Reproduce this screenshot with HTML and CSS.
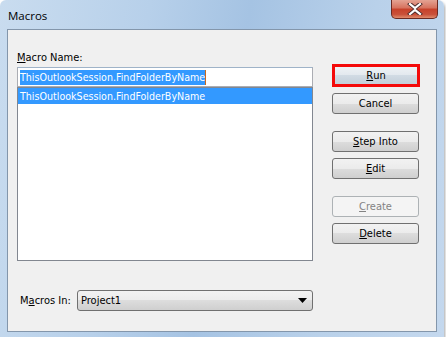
FILE: index.html
```html
<!DOCTYPE html>
<html lang="en">
<head>
  <meta charset="UTF-8">
  <title>Macros</title>
  <link rel="stylesheet" href="styles.css">
</head>
<body>

  <div class="window">
    <div class="titlebar">
      <span class="title">Macros</span>
      <div class="close">
        <svg width="16" height="12" viewBox="0 0 16 12">
          <path d="M3 1 L8 5 L13 1 M3 11 L8 7 L13 11" stroke="#4a2a2a" stroke-width="4" fill="none" stroke-linecap="square"/>
          <path d="M3 1 L8 5 L13 1 M3 11 L8 7 L13 11" stroke="#ffffff" stroke-width="2.2" fill="none" stroke-linecap="square"/>
        </svg>
      </div>
    </div>

    <div class="client">
      <div class="top">
        <div class="left">
          <div class="label"><u>M</u>acro Name:</div>
          <div class="textbox"><span class="sel">ThisOutlookSession.FindFolderByName</span><span class="caret"></span></div>
          <div class="listbox">
            <div class="item selected">ThisOutlookSession.FindFolderByName</div>
          </div>
        </div>

        <div class="right">
          <div class="btn run"><u>R</u>un</div>
          <div class="btn gap-s">Cancel</div>
          <div class="btn gap-l"><u>S</u>tep Into</div>
          <div class="btn gap-s"><u>E</u>dit</div>
          <div class="btn gap-l disabled"><u>C</u>reate</div>
          <div class="btn gap-s"><u>D</u>elete</div>
        </div>
      </div>

      <div class="bottom">
        <span class="label">M<u>a</u>cros In:</span>
        <div class="combo">
          <span>Project1</span>
          <svg width="9" height="5" viewBox="0 0 9 5"><path d="M0 0 H9 L4.5 5 Z" fill="#000"/></svg>
        </div>
      </div>
    </div>
  </div>

</body>
</html>
```

FILE: styles.css
```css
body {
  margin: 0;
  background: #ffffff;
  font-family: "DejaVu Sans Condensed", "Liberation Sans", sans-serif;
  font-size: 11px;
  color: #000;
}

.window {
  width: 444px;
  height: 337px;
  border-radius: 6px 6px 0 0;
  background: linear-gradient(100deg, #c9dcef 0%, #b7d0ea 30%, #a5c3e3 50%, #b9d1ea 75%, #c4d8ee 100%);
  box-shadow: 1px 2px 3px rgba(0,0,0,0.35);
  position: relative;
}

.titlebar {
  height: 29px;
  position: relative;
}

.title {
  position: absolute;
  left: 8px;
  top: 8px;
  font-family: "Open Sans", "Liberation Sans", sans-serif;
  font-size: 11.5px;
  color: #000;
}

.close {
  position: absolute;
  left: 391px;
  top: 0;
  width: 47px;
  height: 19px;
  border: 1px solid #6b2b23;
  border-top: none;
  border-radius: 0 0 5px 5px;
  background: linear-gradient(#e4a393 0%, #d6715d 45%, #c7412a 50%, #c9513a 80%, #e08b6c 100%);
  display: flex;
  align-items: center;
  justify-content: center;
  box-sizing: border-box;
}

.client {
  margin-left: 7px;
  width: 430px;
  height: 303px;
  border: 1px solid #8396ab;
  background: #f0f0f0;
  box-sizing: border-box;
  padding: 21px 0 0 9px;
}

.top {
  display: flex;
  gap: 19px;
}

.left {
  width: 296px;
}

.label {
  height: 15px;
  line-height: 13px;
  margin-bottom: 1px;
  color: #000;
}

.textbox {
  height: 20px;
  border: 1px solid #abadb3;
  border-top-color: #9fb3c8;
  background: #fff;
  box-sizing: border-box;
  padding: 2px 0 0 2px;
  display: flex;
  align-items: flex-start;
}

.sel {
  background: #3399ff;
  color: #fff;
  line-height: 15px;
  font-size: 10.6px;
}

.caret {
  width: 1px;
  height: 15px;
  background: #c76a1e;
}

.listbox {
  height: 174px;
  border: 1px solid #828790;
  background: #fff;
  box-sizing: border-box;
}

.item {
  height: 16px;
  line-height: 16px;
  padding-left: 2px;
  font-size: 10.6px;
}

.item.selected {
  background: #3399ff;
  color: #fff;
}

.right {
  width: 88px;
  padding-top: 13px;
}

.btn {
  width: 87px;
  height: 21px;
  box-sizing: border-box;
  border: 1px solid #707070;
  border-radius: 3px;
  background: linear-gradient(#f2f2f2 0%, #ebebeb 50%, #dddddd 50%, #cfcfcf 100%);
  display: flex;
  align-items: center;
  justify-content: center;
  line-height: 13px;
}

.btn.run {
  width: 88px;
  height: 23px;
  border: 3px solid #f40a0a;
  border-radius: 0;
  background: linear-gradient(#eef2f5 0%, #e2e8ee 50%, #d1dbe4 50%, #c3cfd9 100%);
}

.gap-s {
  margin-top: 6px;
}

.gap-l {
  margin-top: 17px;
}

.btn.disabled {
  border-color: #adb2b5;
  background: #f4f4f4;
  color: #838383;
}

.bottom {
  display: flex;
  align-items: center;
  margin-top: 29px;
  padding-left: 3px;
}

.bottom .label {
  height: auto;
  margin: 0;
  width: 57px;
}

.combo {
  width: 236px;
  height: 21px;
  box-sizing: border-box;
  border: 1px solid #707070;
  border-radius: 3px;
  background: linear-gradient(#f2f2f2 0%, #ebebeb 50%, #dddddd 50%, #cfcfcf 100%);
  display: flex;
  align-items: center;
  justify-content: space-between;
  padding: 0 5px 0 3px;
}
```
